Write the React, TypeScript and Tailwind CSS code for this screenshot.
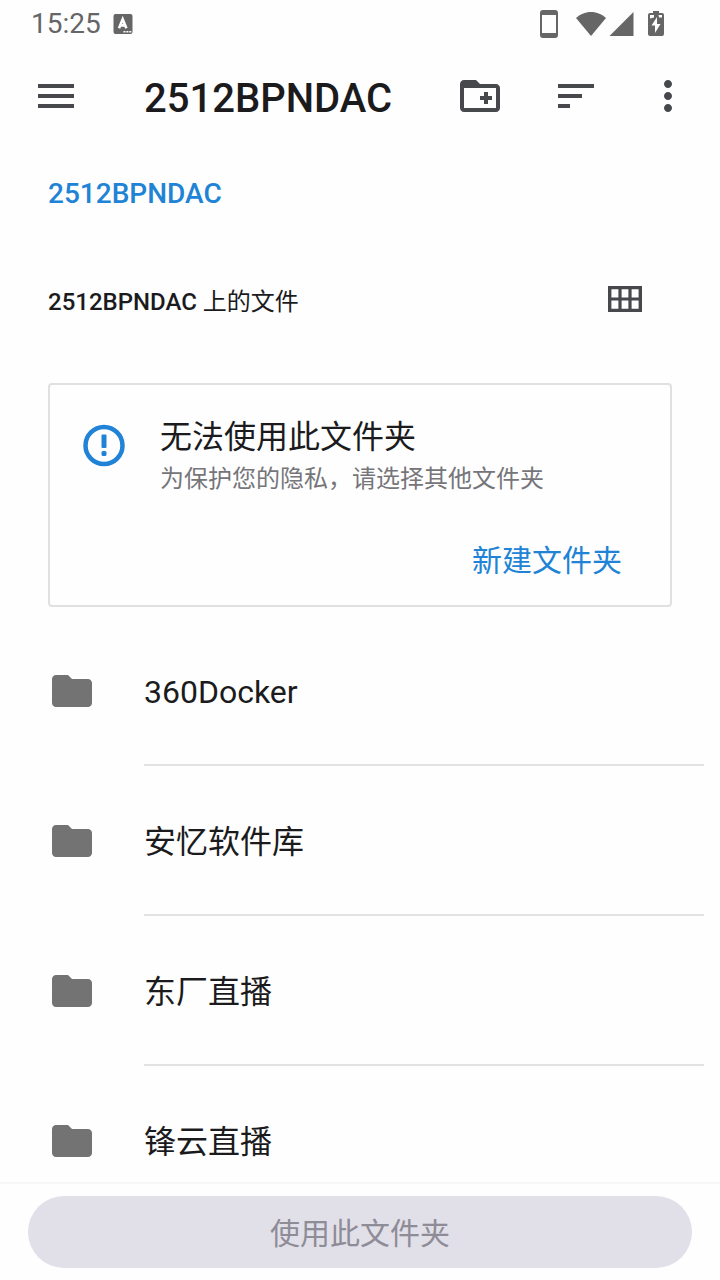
import type { ReactNode } from "react";
import { MdFolder, MdMenu, MdMoreVert, MdSort } from "react-icons/md";

const deviceName = "2512BPNDAC";

const folders = ["360Docker", "安忆软件库", "东厂直播", "锋云直播"];

const CreateFolderIcon = () => (
  <svg viewBox="0 0 24 24" className="size-12" fill="currentColor" aria-hidden="true">
    <path d="M20 6h-8l-2-2H4c-1.1 0-2 .9-2 2v12c0 1.1.9 2 2 2h16c1.1 0 2-.9 2-2V8c0-1.1-.9-2-2-2zm0 12H4V8h16v10zm-8-4h2v2h2v-2h2v-2h-2v-2h-2v2h-2v2z" />
  </svg>
);

const GridIcon = () => (
  <svg viewBox="0 0 24 24" className="size-12" fill="currentColor" aria-hidden="true">
    <path
      fillRule="evenodd"
      d="M4 5h17v13H4V5zm1.7 1.6v4.1h3.5V6.6H5.7zm5.1 0v4.1h3.4V6.6h-3.4zm5 0v4.1h3.5V6.6h-3.5zM5.7 12.3v4.1h3.5v-4.1H5.7zm5.1 0v4.1h3.4v-4.1h-3.4zm5 0v4.1h3.5v-4.1h-3.5z"
    />
  </svg>
);

const AlertIcon = () => (
  <svg viewBox="0 0 48 48" className="mt-2 size-12 shrink-0 text-[#2083d5]" aria-hidden="true">
    <circle cx="24" cy="24.500" r="18.500" fill="none" stroke="currentColor" strokeWidth="4.500" />
    <rect x="21.500" y="13.500" width="5" height="13.500" rx="1" fill="currentColor" />
    <rect x="21.500" y="30" width="5" height="5" rx="1.500" fill="currentColor" />
  </svg>
);

const StatusBar = () => (
  <div className="flex h-12 shrink-0 items-center justify-between pr-14 pl-[31px] text-[#666666]">
    <div className="flex items-center gap-3">
      <span className="text-[28px] leading-8">15:25</span>
      <svg viewBox="0 0 20 20" className="size-5" aria-hidden="true">
        <rect x="0.5" width="19" height="20" rx="2" fill="currentColor" />
        <path d="M6 14.2 9.7 5.2 13.4 14.2M7.4 11.4h4.6" fill="none" stroke="#fefefe" strokeWidth="2.6" />
        <path d="M10.5 17.8h2M13.4 17.8h2M16.3 17.8h2" stroke="#fefefe" strokeWidth="1.4" />
      </svg>
    </div>
    <div className="flex items-center">
      <svg viewBox="0 0 18 28" className="mr-4 h-7 w-[18px]" aria-hidden="true">
        <path
          fill="currentColor"
          fillRule="evenodd"
          d="M3 0h12a3 3 0 0 1 3 3v22a3 3 0 0 1-3 3H3a3 3 0 0 1-3-3V3a3 3 0 0 1 3-3zM2 5v18h14V5H2z"
        />
      </svg>
      <svg viewBox="0 0 60 24" className="mr-[14px] h-6 w-[60px]" fill="currentColor" aria-hidden="true">
        <path d="M17 24 2 6C6 2.500 11 0 17 0s11 2.500 15 6L17 24z" />
        <path d="M35.500 24 59.500 0v24H35.500z" />
      </svg>
      <svg viewBox="0 0 16 26" className="h-[26px] w-4" aria-hidden="true">
        <path fill="currentColor" d="M5 0h6v2h3a2 2 0 0 1 2 2v19a2 2 0 0 1-2 2H2a2 2 0 0 1-2-2V4a2 2 0 0 1 2-2h3V0z" />
        <path fill="#fefefe" d="M2 4h4v2.500L2 7.500V4zM10.500 4H14v2.500h-3L10.500 4zM9 6 3.500 14.500H7V22l5.500-9H9V6z" />
      </svg>
    </div>
  </div>
);

const IconButton = ({ label, children }: { label: string; children: ReactNode }) => (
  <button type="button" aria-label={label} className="shrink-0 text-[#46484c]">
    {children}
  </button>
);

const App = () => {
  return (
    <div className="flex h-screen flex-col overflow-hidden bg-[#fefefe] font-[Roboto,'Noto_Sans_CJK_SC',sans-serif] text-[#1b1b1d]">
      <StatusBar />

      <header className="flex h-24 shrink-0 items-center pr-7 pl-8">
        <IconButton label="菜单">
          <MdMenu className="size-12" />
        </IconButton>
        <h1 className="ml-16 flex-1 truncate pt-1.5 text-[40px] leading-12 font-medium">{deviceName}</h1>
        <IconButton label="新建文件夹">
          <CreateFolderIcon />
        </IconButton>
        <div className="ml-12 flex gap-11">
          <IconButton label="排序方式">
            <MdSort className="size-12" />
          </IconButton>
          <IconButton label="更多选项">
            <MdMoreVert className="size-12" />
          </IconButton>
        </div>
      </header>

      <main className="min-h-0 flex-1 overflow-y-auto [scrollbar-width:none]">
        <nav className="flex h-24 items-center px-12">
          <a href="#" className="pt-1 text-[28px] leading-8 font-medium text-[#2083d5]">
            {deviceName}
          </a>
        </nav>

        <div className="flex h-30 items-center justify-between pr-18 pl-12">
          <h2 className="pt-1 text-[24px] leading-8 font-medium">
            {deviceName} <span className="font-normal">上的文件</span>
          </h2>
          <IconButton label="网格视图">
            <GridIcon />
          </IconButton>
        </div>

        <section className="mx-12 mt-[23px] flex h-56 flex-col justify-between rounded-sm border-2 border-[#e0e0e0] pt-7 pr-12 pb-[22px] pl-[30px]">
          <div className="flex gap-8">
            <AlertIcon />
            <div className="pt-0.5">
              <h3 className="text-[32px] leading-11">无法使用此文件夹</h3>
              <p className="text-[24px] leading-10 text-[#75757a]">为保护您的隐私，请选择其他文件夹</p>
            </div>
          </div>
          <button type="button" className="self-end text-[30px] leading-11 text-[#2083d5]">
            新建文件夹
          </button>
        </section>

        <ul className="mt-[9px]">
          {folders.map((name) => (
            <li key={name} className="flex h-[150px] pr-4 pl-12">
              <button type="button" className="flex flex-1 items-center gap-12 text-left">
                <MdFolder className="size-12 shrink-0 text-[#737373]" />
                <span className="flex h-full flex-1 items-center border-b-2 border-[#e2e2e2] pt-1 text-[32px] leading-10">
                  {name}
                </span>
              </button>
            </li>
          ))}
        </ul>
      </main>

      <footer className="shrink-0 border-t-2 border-[#f7f7f7] px-7 py-3">
        <button
          type="button"
          disabled
          className="h-18 w-full rounded-full bg-[#e1e0e9] pt-1 text-[30px] leading-10 text-[#8e8c96]"
        >
          使用此文件夹
        </button>
      </footer>
    </div>
  );
};

export default App;
